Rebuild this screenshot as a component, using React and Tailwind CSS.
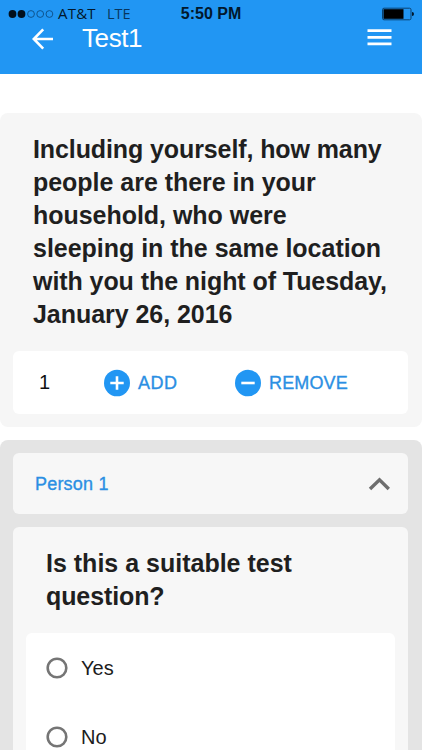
const heading = 'text-[25px] leading-[33px] font-bold text-[#1f1f1f] whitespace-nowrap';
const action = 'text-[18px] text-[#2b8fe3] [-webkit-text-stroke:0.35px_#2b8fe3]';

function StatusBar() {
  return (
    <div className="grid h-7 grid-cols-[160px_102px_1fr] items-center text-[#02182c]">
      <div className="flex items-center pl-2">
        <svg width="47" height="10" viewBox="0 0 47 10">
          <circle cx="4.5" cy="5" r="3.9" fill="#02101d" />
          <circle cx="13.5" cy="5" r="3.9" fill="#02101d" />
          <g fill="none" stroke="#0c4d83" strokeWidth="0.9">
            <circle cx="23" cy="5" r="3.4" />
            <circle cx="32.2" cy="5" r="3.4" />
            <circle cx="41.4" cy="5" r="3.4" />
          </g>
        </svg>
        <span className="ml-[3px] w-[49px] pb-0.5 text-[15px] tracking-[0.2px] font-['Open_Sans',sans-serif]">AT&amp;T</span>
        <span className="pb-px text-[14.5px] text-[#07365e] font-['Open_Sans',sans-serif]">LTE</span>
      </div>
      <div className="text-center text-[16px] font-bold whitespace-nowrap">5:50 PM</div>
      <div className="flex justify-end pr-[7px]">
        <svg width="34" height="14" viewBox="0 0 34 14">
          <rect x="1.5" y="1.2" width="28.5" height="11.6" rx="1.5" fill="none" stroke="#094272" strokeWidth="1" />
          <rect x="2.5" y="2.2" width="20" height="9.6" fill="#000" />
          <path d="M31 5 a2 2 0 0 1 0 4z" fill="#02182c" />
        </svg>
      </div>
    </div>
  );
}

function CircleIcon({ plus }) {
  return (
    <svg width="26" height="28" viewBox="0 0 26 28">
      <ellipse cx="13" cy="14" rx="13" ry="13.3" fill="#2196f3" />
      <path d={plus ? 'M6.3 14h13.4M13 7.3v13.4' : 'M6.3 14h13.4'} stroke="#fff" strokeWidth="2.6" />
    </svg>
  );
}

function Option({ label }) {
  return (
    <div className="flex h-[69px] items-center pl-5 text-[20px] text-[#1c1c1c]">
      <svg width="22" height="22" viewBox="0 0 22 22">
        <circle cx="11" cy="11" r="9.3" fill="none" stroke="#757575" strokeWidth="2.6" />
      </svg>
      <span className="ml-[13px]">{label}</span>
    </div>
  );
}

export default function App() {
  return (
    <div className="h-[750px] w-[422px] overflow-hidden bg-white font-['Liberation_Sans',Arial,sans-serif]">
      <header className="h-[74px] bg-[#2196f3]">
        <StatusBar />
        <div className="flex h-[21px] items-center pr-[30px] pl-8">
          <svg width="22" height="22" viewBox="0 0 22 22" fill="none" stroke="#fff" strokeWidth="2.6">
            <path d="M21 11H2M11.2 1.4 1.8 11l9.4 9.6" />
          </svg>
          <h1 className="ml-7 pb-px text-[26px] leading-[22px] tracking-[-0.4px] text-white">Test1</h1>
          <svg className="mb-[3px] ml-auto" width="25" height="18" viewBox="0 0 25 18">
            <path d="M0.5 2.6h24M0.5 9.3h24M0.5 15.9h24" stroke="#fff" strokeWidth="2.7" />
          </svg>
        </div>
      </header>

      <section className="mt-[39px] h-[314px] rounded-lg bg-[#f6f6f6] px-[13px] pt-5">
        <h2 className={`${heading} pl-5`}>
          <span className="block tracking-[-0.1px]">Including yourself, how many</span>
          <span className="block tracking-[-0.03px]">people are there in your</span>
          <span className="block tracking-[-0.03px]">household, who were</span>
          <span className="block tracking-[-0.02px]">sleeping in the same location</span>
          <span className="block tracking-[-0.07px]">with you the night of Tuesday,</span>
          <span className="block tracking-[-0.05px]">January 26, 2016</span>
        </h2>
        <div className="mt-5 flex h-[63px] w-[395px] items-center rounded-md bg-white">
          <span className="w-[91px] pb-0.5 pl-[26px] text-[20px] text-[#111]">1</span>
          <button className={`flex w-[131px] items-center gap-2 ${action}`}>
            <CircleIcon plus />
            <span className="pt-px tracking-[0.5px]">ADD</span>
          </button>
          <button className={`flex items-center gap-2 ${action}`}>
            <CircleIcon />
            <span className="pt-px tracking-[0.15px]">REMOVE</span>
          </button>
        </div>
      </section>

      <section className="mt-[13px] h-[330px] rounded-t-lg bg-[#e4e4e4] px-[13px] pt-[13px]">
        <div className="flex h-[61px] w-[395px] items-center justify-between rounded-md bg-[#f7f7f7] pr-[18px] pl-[22px]">
          <span className={`pt-0.5 tracking-[0.2px] ${action}`}>Person 1</span>
          <svg width="22" height="14" viewBox="0 0 22 14" fill="none" stroke="#6e6e6e" strokeWidth="3.4">
            <path d="M2 12 11.5 2.8l9.3 9.2" />
          </svg>
        </div>
        <div className="mt-[13px] h-[240px] w-[395px] rounded-t-md bg-[#f7f7f7] px-[13px] pt-5">
          <h2 className={`${heading} pl-5`}>
            <span className="block">Is this a suitable test</span>
            <span className="block tracking-[-0.1px]">question?</span>
          </h2>
          <div className="mt-5 h-[140px] w-[369px] rounded-md bg-white">
            <Option label="Yes" />
            <Option label="No" />
          </div>
        </div>
      </section>
    </div>
  );
}
